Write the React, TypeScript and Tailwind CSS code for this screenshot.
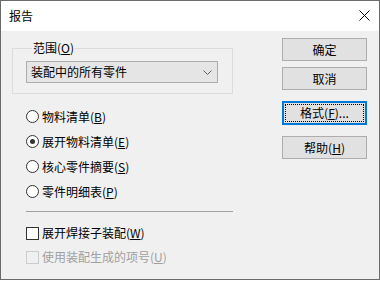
import React from "react";

const font = { fontFamily: '"Noto Sans CJK SC", "Noto Sans", sans-serif' };

function Radio({ checked, children }: { checked?: boolean; children: React.ReactNode }) {
  return (
    <div className="flex h-[25px] items-center gap-[3px]">
      <span className="flex h-[13px] w-[13px] items-center justify-center rounded-full border border-[#333333] bg-white">
        {checked && <span className="h-[5px] w-[5px] rounded-full bg-[#333333]" />}
      </span>
      <span className="text-[12px] leading-[16px] text-black">{children}</span>
    </div>
  );
}

function Check({ disabled, children }: { disabled?: boolean; children: React.ReactNode }) {
  return (
    <div className="flex h-[24px] items-center gap-[3px]">
      <span
        className={
          disabled
            ? "h-[13px] w-[13px] border border-[#cccccc] bg-[#f0f0f0]"
            : "h-[13px] w-[13px] border border-[#333333] bg-white"
        }
      />
      <span className={disabled ? "text-[12px] leading-[16px] text-[#a0a0a0]" : "text-[12px] leading-[16px] text-black"}>
        {children}
      </span>
    </div>
  );
}

function Btn({ children, def }: { children: React.ReactNode; def?: boolean }) {
  return (
    <div
      className={
        def
          ? "flex h-[24px] w-[85px] items-center justify-center border border-[#0078d7] bg-[#e1e1e1] text-[12px] leading-[16px] text-black shadow-[inset_0_0_0_1px_#0078d7] outline-1 outline-offset-[-4px] outline-dotted outline-black"
          : "flex h-[23px] w-[85px] items-center justify-center border border-[#adadad] bg-[#e1e1e1] text-[12px] leading-[16px] text-black"
      }
    >
      {children}
    </div>
  );
}

export default function App() {
  return (
    <div className="flex h-[281px] w-[380px] flex-col bg-white" style={font}>
      <div className="flex h-[280px] w-[380px] flex-col border border-[#6a6a6a]">
        <div className="flex h-[30px] items-center justify-between bg-white pl-[8px] pr-[9px]">
          <span className="text-[12px] leading-[16px] text-black">报告</span>
          <svg width="11" height="11" viewBox="0 0 11 11" className="mt-[-1px]">
            <path d="M0.5 0.5 L10.5 10.5 M10.5 0.5 L0.5 10.5" stroke="#000" strokeWidth="1" fill="none" />
          </svg>
        </div>
        <div className="flex flex-1 bg-[#f0f0f0]">
          <div className="flex w-[281px] flex-col pl-[11px]">
            <fieldset className="mt-[9px] w-[220px] border border-[#dcdcdc] pb-[10px] pl-[13px] pr-[14px] pt-[5px]">
              <legend className="ml-[6px] px-[1px] text-[12px] leading-[16px] text-black">
                范围(<u>O</u>)
              </legend>
              <div className="flex h-[22px] w-[192px] items-center justify-between border border-[#adadad] bg-[#e5e5e5] pl-[4px] pr-[5px]">
                <span className="text-[12px] leading-[16px] text-black">装配中的所有零件</span>
                <svg width="9" height="5" viewBox="0 0 9 5">
                  <path d="M0.5 0.5 L4.5 4.5 L8.5 0.5" stroke="#606060" strokeWidth="1" fill="none" />
                </svg>
              </div>
            </fieldset>
            <div className="ml-[14px] mt-[10px] flex flex-col">
              <Radio>
                物料清单(<u>B</u>)
              </Radio>
              <Radio checked>
                展开物料清单(<u>E</u>)
              </Radio>
              <Radio>
                核心零件摘要(<u>S</u>)
              </Radio>
              <Radio>
                零件明细表(<u>P</u>)
              </Radio>
            </div>
            <div className="ml-[14px] mt-[7px] h-[1px] w-[207px] bg-[#a0a0a0]" />
            <div className="ml-[14px] mt-[9px] flex flex-col">
              <Check>
                展开焊接子装配(<u>W</u>)
              </Check>
              <Check disabled>
                使用装配生成的项号(<u>U</u>)
              </Check>
            </div>
          </div>
          <div className="flex flex-col pt-[7px]">
            <Btn>确定</Btn>
            <div className="h-[6px]" />
            <Btn>取消</Btn>
            <div className="h-[11px]" />
            <Btn def>
              格式(<u>F</u>)...
            </Btn>
            <div className="h-[11px]" />
            <Btn>
              帮助(<u>H</u>)
            </Btn>
          </div>
        </div>
      </div>
    </div>
  );
}
